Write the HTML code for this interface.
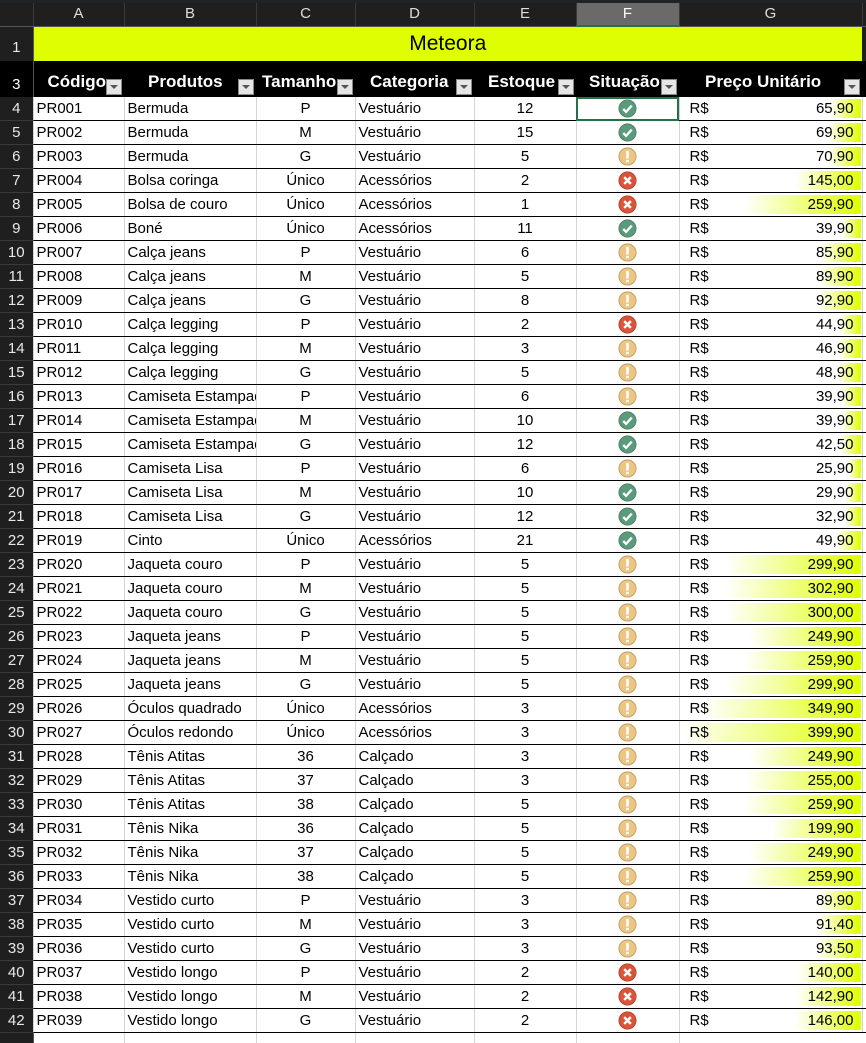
<!DOCTYPE html>
<html><head><meta charset="utf-8"><style>
body{margin:0;width:866px;height:1039px;overflow:hidden;background:#fff;font-family:"Liberation Sans",sans-serif;}
#top{position:absolute;left:0;top:0;width:866px;height:3px;background:#1f2326}
table{position:absolute;left:0;top:3px;width:866px;border-collapse:collapse;table-layout:fixed;}
td{padding:0;overflow:hidden;white-space:nowrap;font-size:15px;color:#000;position:relative;line-height:23px}
.ch td{height:22px;line-height:22px;background:#1f1f1f;color:#ddd;text-align:center;font-size:15px;border-right:1px solid #3a3a3a;border-bottom:1px solid #555}
.ch td.sel{background:#6a6a6a;border-bottom:2px solid #217346;color:#fff}
td.rn{background:#1f1f1f;color:#e8e8e8;text-align:center;font-size:15px;border-right:1px solid #555;}
tr.r td{height:23px;border-bottom:1px solid #000;border-right:1px solid #d4d4d4}
tr.r td.rn{border-bottom:1px solid #3a3a3a}
td.l{padding-left:3px}
td.c{text-align:center}
.t1 td{height:34px;line-height:34px}
.t1 td.y{background:#dfff00;text-align:center;font-size:21px}
.t1 td.rn{vertical-align:bottom;line-height:26px}
.t2 td{height:6px;background:#000;font-size:0;line-height:0;}
.t3 td{height:30px;line-height:30px;background:#000;color:#fff;font-weight:bold;font-size:17px;}
.t3 td.rn{font-weight:normal;font-size:15px;vertical-align:bottom;line-height:24px}
.hb{position:absolute;bottom:0;height:30px;line-height:30px;overflow:hidden}
.fb{position:absolute;right:2px;bottom:2px;width:14px;height:14px;background:#e6e6e6;border:1px solid #888}
.fb:after{content:"";position:absolute;left:3px;top:5px;border-left:4px solid transparent;border-right:4px solid transparent;border-top:4px solid #555}
.g{padding-left:10px}
.g .bar{position:absolute;right:1px;top:2px;bottom:2px;background:linear-gradient(to right,#fff,#dfff00)}
.g .v{position:absolute;right:8px;top:0;line-height:23px;}
.g .rs{position:relative;line-height:23px}
svg.i{display:block;margin:0 auto;width:19px;height:19px}
.hl{outline:2px solid #217346;outline-offset:-2px}
</style></head><body>
<div id="top"></div>
<svg width="0" height="0" style="position:absolute"><defs>
<symbol id="ok" viewBox="0 0 20 20"><circle cx="10" cy="10" r="9" fill="#5b9a7c" stroke="#4a8066"/><path d="M5.5 10.5l3 3 6-6.5" stroke="#fff" stroke-width="2.4" fill="none"/></symbol>
<symbol id="w" viewBox="0 0 20 20"><circle cx="10" cy="10" r="9" fill="#ebc684" stroke="#c29a5c"/><rect x="8.6" y="4" width="2.8" height="8" fill="#fff"/><rect x="8.6" y="13.5" width="2.8" height="2.6" fill="#fff"/></symbol>
<symbol id="x" viewBox="0 0 20 20"><circle cx="10" cy="10" r="9" fill="#d9553a" stroke="#b5432c"/><path d="M6.5 6.5l7 7M13.5 6.5l-7 7" stroke="#fff" stroke-width="2.6"/></symbol>
</defs></svg>
<table>
<colgroup><col style="width:33px"><col style="width:91px"><col style="width:132px"><col style="width:99px"><col style="width:119px"><col style="width:102px"><col style="width:103px"><col style="width:183px"><col style="width:4px"></colgroup>
<tr class="ch"><td style="background:#1f1f1f"></td><td>A</td><td>B</td><td>C</td><td>D</td><td>E</td><td class="sel">F</td><td>G</td><td></td></tr>
<tr class="t1"><td class="rn">1</td><td class="y" colspan="7">Meteora</td><td style="background:#1f1f1f"></td></tr>
<tr class="t2"><td class="rn"></td><td colspan="8"></td></tr>
<tr class="t3"><td class="rn">3</td>
<td><div class="hb" style="left:14px;width:62px">Código</div><div class="fb"></div></td>
<td><div class="hb" style="left:24px;width:88px">Produtos</div><div class="fb"></div></td>
<td><div class="hb" style="left:6px;width:78px">Tamanho</div><div class="fb"></div></td>
<td><div class="hb" style="left:15px;width:88px">Categoria</div><div class="fb"></div></td>
<td><div class="hb" style="left:14px;width:72px">Estoque</div><div class="fb"></div></td>
<td><div class="hb" style="left:13px;width:74px">Situação</div><div class="fb"></div></td>
<td><div class="hb" style="left:26px;width:140px">Preço Unitário</div><div class="fb"></div></td><td></td></tr>
<tr class="r"><td class="rn">4</td><td class="l">PR001</td><td class="l">Bermuda</td><td class="c">P</td><td class="l">Vestuário</td><td class="c">12</td><td class="hl"><svg class="i"><use href="#ok"/></svg></td><td class="g"><div class="bar" style="width:31px"></div><span class="rs">R$</span><span class="v">65,90</span></td><td></td></tr>
<tr class="r"><td class="rn">5</td><td class="l">PR002</td><td class="l">Bermuda</td><td class="c">M</td><td class="l">Vestuário</td><td class="c">15</td><td><svg class="i"><use href="#ok"/></svg></td><td class="g"><div class="bar" style="width:33px"></div><span class="rs">R$</span><span class="v">69,90</span></td><td></td></tr>
<tr class="r"><td class="rn">6</td><td class="l">PR003</td><td class="l">Bermuda</td><td class="c">G</td><td class="l">Vestuário</td><td class="c">5</td><td><svg class="i"><use href="#w"/></svg></td><td class="g"><div class="bar" style="width:33px"></div><span class="rs">R$</span><span class="v">70,90</span></td><td></td></tr>
<tr class="r"><td class="rn">7</td><td class="l">PR004</td><td class="l">Bolsa coringa</td><td class="c">Único</td><td class="l">Acessórios</td><td class="c">2</td><td><svg class="i"><use href="#x"/></svg></td><td class="g"><div class="bar" style="width:66px"></div><span class="rs">R$</span><span class="v">145,00</span></td><td></td></tr>
<tr class="r"><td class="rn">8</td><td class="l">PR005</td><td class="l">Bolsa de couro</td><td class="c">Único</td><td class="l">Acessórios</td><td class="c">1</td><td><svg class="i"><use href="#x"/></svg></td><td class="g"><div class="bar" style="width:117px"></div><span class="rs">R$</span><span class="v">259,90</span></td><td></td></tr>
<tr class="r"><td class="rn">9</td><td class="l">PR006</td><td class="l">Boné</td><td class="c">Único</td><td class="l">Acessórios</td><td class="c">11</td><td><svg class="i"><use href="#ok"/></svg></td><td class="g"><div class="bar" style="width:19px"></div><span class="rs">R$</span><span class="v">39,90</span></td><td></td></tr>
<tr class="r"><td class="rn">10</td><td class="l">PR007</td><td class="l">Calça jeans</td><td class="c">P</td><td class="l">Vestuário</td><td class="c">6</td><td><svg class="i"><use href="#w"/></svg></td><td class="g"><div class="bar" style="width:40px"></div><span class="rs">R$</span><span class="v">85,90</span></td><td></td></tr>
<tr class="r"><td class="rn">11</td><td class="l">PR008</td><td class="l">Calça jeans</td><td class="c">M</td><td class="l">Vestuário</td><td class="c">5</td><td><svg class="i"><use href="#w"/></svg></td><td class="g"><div class="bar" style="width:42px"></div><span class="rs">R$</span><span class="v">89,90</span></td><td></td></tr>
<tr class="r"><td class="rn">12</td><td class="l">PR009</td><td class="l">Calça jeans</td><td class="c">G</td><td class="l">Vestuário</td><td class="c">8</td><td><svg class="i"><use href="#w"/></svg></td><td class="g"><div class="bar" style="width:43px"></div><span class="rs">R$</span><span class="v">92,90</span></td><td></td></tr>
<tr class="r"><td class="rn">13</td><td class="l">PR010</td><td class="l">Calça legging</td><td class="c">P</td><td class="l">Vestuário</td><td class="c">2</td><td><svg class="i"><use href="#x"/></svg></td><td class="g"><div class="bar" style="width:21px"></div><span class="rs">R$</span><span class="v">44,90</span></td><td></td></tr>
<tr class="r"><td class="rn">14</td><td class="l">PR011</td><td class="l">Calça legging</td><td class="c">M</td><td class="l">Vestuário</td><td class="c">3</td><td><svg class="i"><use href="#w"/></svg></td><td class="g"><div class="bar" style="width:22px"></div><span class="rs">R$</span><span class="v">46,90</span></td><td></td></tr>
<tr class="r"><td class="rn">15</td><td class="l">PR012</td><td class="l">Calça legging</td><td class="c">G</td><td class="l">Vestuário</td><td class="c">5</td><td><svg class="i"><use href="#w"/></svg></td><td class="g"><div class="bar" style="width:23px"></div><span class="rs">R$</span><span class="v">48,90</span></td><td></td></tr>
<tr class="r"><td class="rn">16</td><td class="l">PR013</td><td class="l">Camiseta Estampada</td><td class="c">P</td><td class="l">Vestuário</td><td class="c">6</td><td><svg class="i"><use href="#w"/></svg></td><td class="g"><div class="bar" style="width:19px"></div><span class="rs">R$</span><span class="v">39,90</span></td><td></td></tr>
<tr class="r"><td class="rn">17</td><td class="l">PR014</td><td class="l">Camiseta Estampada</td><td class="c">M</td><td class="l">Vestuário</td><td class="c">10</td><td><svg class="i"><use href="#ok"/></svg></td><td class="g"><div class="bar" style="width:19px"></div><span class="rs">R$</span><span class="v">39,90</span></td><td></td></tr>
<tr class="r"><td class="rn">18</td><td class="l">PR015</td><td class="l">Camiseta Estampada</td><td class="c">G</td><td class="l">Vestuário</td><td class="c">12</td><td><svg class="i"><use href="#ok"/></svg></td><td class="g"><div class="bar" style="width:20px"></div><span class="rs">R$</span><span class="v">42,50</span></td><td></td></tr>
<tr class="r"><td class="rn">19</td><td class="l">PR016</td><td class="l">Camiseta Lisa</td><td class="c">P</td><td class="l">Vestuário</td><td class="c">6</td><td><svg class="i"><use href="#w"/></svg></td><td class="g"><div class="bar" style="width:13px"></div><span class="rs">R$</span><span class="v">25,90</span></td><td></td></tr>
<tr class="r"><td class="rn">20</td><td class="l">PR017</td><td class="l">Camiseta Lisa</td><td class="c">M</td><td class="l">Vestuário</td><td class="c">10</td><td><svg class="i"><use href="#ok"/></svg></td><td class="g"><div class="bar" style="width:15px"></div><span class="rs">R$</span><span class="v">29,90</span></td><td></td></tr>
<tr class="r"><td class="rn">21</td><td class="l">PR018</td><td class="l">Camiseta Lisa</td><td class="c">G</td><td class="l">Vestuário</td><td class="c">12</td><td><svg class="i"><use href="#ok"/></svg></td><td class="g"><div class="bar" style="width:16px"></div><span class="rs">R$</span><span class="v">32,90</span></td><td></td></tr>
<tr class="r"><td class="rn">22</td><td class="l">PR019</td><td class="l">Cinto</td><td class="c">Único</td><td class="l">Acessórios</td><td class="c">21</td><td><svg class="i"><use href="#ok"/></svg></td><td class="g"><div class="bar" style="width:24px"></div><span class="rs">R$</span><span class="v">49,90</span></td><td></td></tr>
<tr class="r"><td class="rn">23</td><td class="l">PR020</td><td class="l">Jaqueta couro</td><td class="c">P</td><td class="l">Vestuário</td><td class="c">5</td><td><svg class="i"><use href="#w"/></svg></td><td class="g"><div class="bar" style="width:135px"></div><span class="rs">R$</span><span class="v">299,90</span></td><td></td></tr>
<tr class="r"><td class="rn">24</td><td class="l">PR021</td><td class="l">Jaqueta couro</td><td class="c">M</td><td class="l">Vestuário</td><td class="c">5</td><td><svg class="i"><use href="#w"/></svg></td><td class="g"><div class="bar" style="width:136px"></div><span class="rs">R$</span><span class="v">302,90</span></td><td></td></tr>
<tr class="r"><td class="rn">25</td><td class="l">PR022</td><td class="l">Jaqueta couro</td><td class="c">G</td><td class="l">Vestuário</td><td class="c">5</td><td><svg class="i"><use href="#w"/></svg></td><td class="g"><div class="bar" style="width:135px"></div><span class="rs">R$</span><span class="v">300,00</span></td><td></td></tr>
<tr class="r"><td class="rn">26</td><td class="l">PR023</td><td class="l">Jaqueta jeans</td><td class="c">P</td><td class="l">Vestuário</td><td class="c">5</td><td><svg class="i"><use href="#w"/></svg></td><td class="g"><div class="bar" style="width:112px"></div><span class="rs">R$</span><span class="v">249,90</span></td><td></td></tr>
<tr class="r"><td class="rn">27</td><td class="l">PR024</td><td class="l">Jaqueta jeans</td><td class="c">M</td><td class="l">Vestuário</td><td class="c">5</td><td><svg class="i"><use href="#w"/></svg></td><td class="g"><div class="bar" style="width:117px"></div><span class="rs">R$</span><span class="v">259,90</span></td><td></td></tr>
<tr class="r"><td class="rn">28</td><td class="l">PR025</td><td class="l">Jaqueta jeans</td><td class="c">G</td><td class="l">Vestuário</td><td class="c">5</td><td><svg class="i"><use href="#w"/></svg></td><td class="g"><div class="bar" style="width:135px"></div><span class="rs">R$</span><span class="v">299,90</span></td><td></td></tr>
<tr class="r"><td class="rn">29</td><td class="l">PR026</td><td class="l">Óculos quadrado</td><td class="c">Único</td><td class="l">Acessórios</td><td class="c">3</td><td><svg class="i"><use href="#w"/></svg></td><td class="g"><div class="bar" style="width:157px"></div><span class="rs">R$</span><span class="v">349,90</span></td><td></td></tr>
<tr class="r"><td class="rn">30</td><td class="l">PR027</td><td class="l">Óculos redondo</td><td class="c">Único</td><td class="l">Acessórios</td><td class="c">3</td><td><svg class="i"><use href="#w"/></svg></td><td class="g"><div class="bar" style="width:180px"></div><span class="rs">R$</span><span class="v">399,90</span></td><td></td></tr>
<tr class="r"><td class="rn">31</td><td class="l">PR028</td><td class="l">Tênis Atitas</td><td class="c">36</td><td class="l">Calçado</td><td class="c">3</td><td><svg class="i"><use href="#w"/></svg></td><td class="g"><div class="bar" style="width:112px"></div><span class="rs">R$</span><span class="v">249,90</span></td><td></td></tr>
<tr class="r"><td class="rn">32</td><td class="l">PR029</td><td class="l">Tênis Atitas</td><td class="c">37</td><td class="l">Calçado</td><td class="c">3</td><td><svg class="i"><use href="#w"/></svg></td><td class="g"><div class="bar" style="width:115px"></div><span class="rs">R$</span><span class="v">255,00</span></td><td></td></tr>
<tr class="r"><td class="rn">33</td><td class="l">PR030</td><td class="l">Tênis Atitas</td><td class="c">38</td><td class="l">Calçado</td><td class="c">5</td><td><svg class="i"><use href="#w"/></svg></td><td class="g"><div class="bar" style="width:117px"></div><span class="rs">R$</span><span class="v">259,90</span></td><td></td></tr>
<tr class="r"><td class="rn">34</td><td class="l">PR031</td><td class="l">Tênis Nika</td><td class="c">36</td><td class="l">Calçado</td><td class="c">5</td><td><svg class="i"><use href="#w"/></svg></td><td class="g"><div class="bar" style="width:90px"></div><span class="rs">R$</span><span class="v">199,90</span></td><td></td></tr>
<tr class="r"><td class="rn">35</td><td class="l">PR032</td><td class="l">Tênis Nika</td><td class="c">37</td><td class="l">Calçado</td><td class="c">5</td><td><svg class="i"><use href="#w"/></svg></td><td class="g"><div class="bar" style="width:112px"></div><span class="rs">R$</span><span class="v">249,90</span></td><td></td></tr>
<tr class="r"><td class="rn">36</td><td class="l">PR033</td><td class="l">Tênis Nika</td><td class="c">38</td><td class="l">Calçado</td><td class="c">5</td><td><svg class="i"><use href="#w"/></svg></td><td class="g"><div class="bar" style="width:117px"></div><span class="rs">R$</span><span class="v">259,90</span></td><td></td></tr>
<tr class="r"><td class="rn">37</td><td class="l">PR034</td><td class="l">Vestido curto</td><td class="c">P</td><td class="l">Vestuário</td><td class="c">3</td><td><svg class="i"><use href="#w"/></svg></td><td class="g"><div class="bar" style="width:42px"></div><span class="rs">R$</span><span class="v">89,90</span></td><td></td></tr>
<tr class="r"><td class="rn">38</td><td class="l">PR035</td><td class="l">Vestido curto</td><td class="c">M</td><td class="l">Vestuário</td><td class="c">3</td><td><svg class="i"><use href="#w"/></svg></td><td class="g"><div class="bar" style="width:43px"></div><span class="rs">R$</span><span class="v">91,40</span></td><td></td></tr>
<tr class="r"><td class="rn">39</td><td class="l">PR036</td><td class="l">Vestido curto</td><td class="c">G</td><td class="l">Vestuário</td><td class="c">3</td><td><svg class="i"><use href="#w"/></svg></td><td class="g"><div class="bar" style="width:44px"></div><span class="rs">R$</span><span class="v">93,50</span></td><td></td></tr>
<tr class="r"><td class="rn">40</td><td class="l">PR037</td><td class="l">Vestido longo</td><td class="c">P</td><td class="l">Vestuário</td><td class="c">2</td><td><svg class="i"><use href="#x"/></svg></td><td class="g"><div class="bar" style="width:64px"></div><span class="rs">R$</span><span class="v">140,00</span></td><td></td></tr>
<tr class="r"><td class="rn">41</td><td class="l">PR038</td><td class="l">Vestido longo</td><td class="c">M</td><td class="l">Vestuário</td><td class="c">2</td><td><svg class="i"><use href="#x"/></svg></td><td class="g"><div class="bar" style="width:65px"></div><span class="rs">R$</span><span class="v">142,90</span></td><td></td></tr>
<tr class="r"><td class="rn">42</td><td class="l">PR039</td><td class="l">Vestido longo</td><td class="c">G</td><td class="l">Vestuário</td><td class="c">2</td><td><svg class="i"><use href="#x"/></svg></td><td class="g"><div class="bar" style="width:66px"></div><span class="rs">R$</span><span class="v">146,00</span></td><td></td></tr>
<tr><td class="rn" style="height:10px"></td><td style="border-right:1px solid #d4d4d4"></td><td style="border-right:1px solid #d4d4d4"></td><td style="border-right:1px solid #d4d4d4"></td><td style="border-right:1px solid #d4d4d4"></td><td style="border-right:1px solid #d4d4d4"></td><td style="border-right:1px solid #d4d4d4"></td><td></td><td></td></tr>
</table>
</body></html>
